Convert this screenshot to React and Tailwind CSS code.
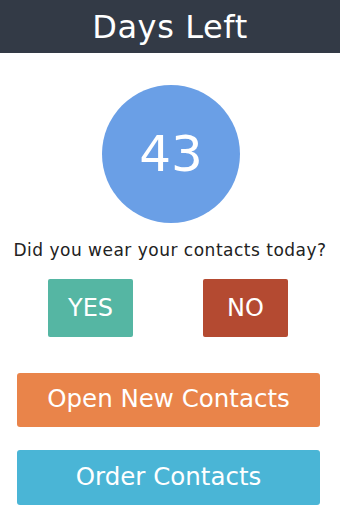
export default function App() {
  return (
    <div className="w-[340px] h-[510px] bg-white overflow-hidden" style={{ fontFamily: '"DejaVu Sans", Verdana, sans-serif' }}>
      <header className="h-[53px] bg-[#333a46] flex items-center justify-center">
        <h1 className="text-white text-[32px] tracking-[0.6px] leading-none">Days Left</h1>
      </header>

      <div className="flex justify-center mt-[32px] pl-[2px]">
        <div className="w-[138px] h-[138px] rounded-full bg-[#6a9fe6] flex items-center justify-center">
          <span className="text-white text-[50px] leading-none">43</span>
        </div>
      </div>

      <p className="mt-[15px] text-center text-[17px] tracking-[0.5px] text-[#222]">Did you wear your contacts today?</p>

      <div className="mt-[15px] pl-[48px] flex gap-[70px]">
        <button className="w-[85px] h-[58px] rounded-[2px] bg-[#55b6a3] text-white text-[24px]">YES</button>
        <button className="w-[85px] h-[58px] rounded-[2px] bg-[#b44a31] text-white text-[24px]">NO</button>
      </div>

      <div className="mt-[36px] pl-[17px] pr-[20px] flex flex-col gap-[23px]">
        <button className="h-[54px] rounded-[3px] bg-[#e9844a] text-white text-[24.5px]">Open New Contacts</button>
        <button className="h-[55px] rounded-[3px] bg-[#4ab5d6] text-white text-[24.5px]">Order Contacts</button>
      </div>
    </div>
  );
}
